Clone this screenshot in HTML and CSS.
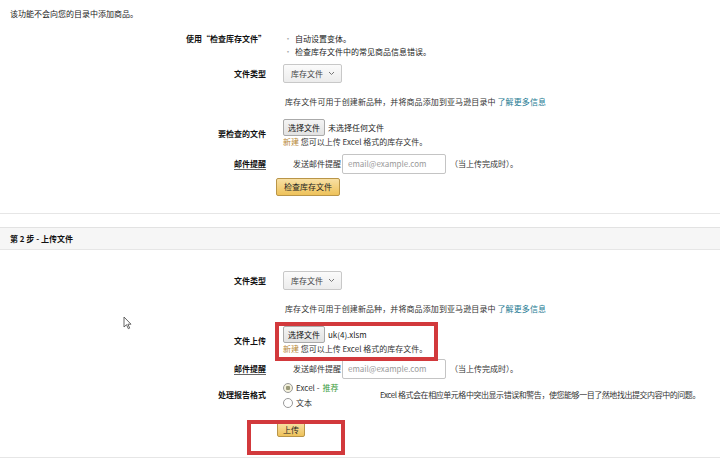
FILE: index.html
```html
<!DOCTYPE html>
<html lang="zh-CN">
<head>
  <meta charset="UTF-8">
  <title>上传库存文件</title>
  <link rel="stylesheet" href="styles.css">
</head>
<body>
  <p class="intro">该功能不会向您的目录中添加商品。</p>

  <div class="row usage">
    <div class="label">使用“检查库存文件”</div>
    <ul class="bullets">
      <li>自动设置变体。</li>
      <li>检查库存文件中的常见商品信息错误。</li>
    </ul>
  </div>

  <div class="row type">
    <div class="label">文件类型</div>
    <div><span class="select">库存文件 <svg width="7" height="5" viewBox="0 0 7 5"><path d="M1 1l2.5 2.5L6 1" fill="none" stroke="#777" stroke-width="1"/></svg></span></div>
  </div>

  <div class="row info">
    <div></div>
    <div>库存文件可用于创建新品种，并将商品添加到亚马逊目录中 <a href="#">了解更多信息</a></div>
  </div>

  <div class="row file">
    <div class="label">要检查的文件</div>
    <div>
      <div class="file-line"><span class="file-btn">选择文件</span> 未选择任何文件</div>
      <div class="hint"><span class="new">新建</span> 您可以上传 Excel 格式的库存文件。</div>
    </div>
  </div>

  <div class="row email">
    <div class="label"><span class="dotted">邮件提醒</span></div>
    <div class="email-line">发送邮件提醒<span class="input">email@example.com</span><span class="when">（当上传完成时）。</span></div>
  </div>

  <div class="action check"><span class="yellow-btn">检查库存文件</span></div>

  <div class="divider"></div>
  <div class="step">第 2 步 - 上传文件</div>

  <div class="row type type2">
    <div class="label">文件类型</div>
    <div><span class="select">库存文件 <svg width="7" height="5" viewBox="0 0 7 5"><path d="M1 1l2.5 2.5L6 1" fill="none" stroke="#777" stroke-width="1"/></svg></span></div>
  </div>

  <div class="row info">
    <div></div>
    <div>库存文件可用于创建新品种，并将商品添加到亚马逊目录中 <a href="#">了解更多信息</a></div>
  </div>

  <div class="row file">
    <div class="label">文件上传</div>
    <div>
      <div class="file-line"><span class="file-btn">选择文件</span> uk(4).xlsm</div>
      <div class="hint"><span class="new">新建</span> 您可以上传 Excel 格式的库存文件。</div>
    </div>
  </div>

  <div class="row email email2">
    <div class="label"><span class="dotted">邮件提醒</span></div>
    <div class="email-line">发送邮件提醒<span class="input">email@example.com</span><span class="when">（当上传完成时）。</span></div>
  </div>

  <div class="row format">
    <div class="label">处理报告格式</div>
    <div class="format-line">
      <div class="radios">
        <div class="radio-item"><span class="radio checked"></span>Excel - <span class="green">推荐</span></div>
        <div class="radio-item"><span class="radio"></span>文本</div>
      </div>
      <div class="format-desc">Excel 格式会在相应单元格中突出显示错误和警告，使您能够一目了然地找出提交内容中的问题。</div>
    </div>
  </div>

  <div class="action upload"><span class="yellow-btn small">上传</span></div>

  <div class="bottom-line"></div>

  <div class="mark mark-file"></div>
  <div class="mark mark-upload"></div>

  <svg class="cursor" width="9" height="14" viewBox="0 0 9 14">
    <path d="M1 1v10l2.5-2.3 1.8 4 1.4-.6-1.8-3.9H8z" fill="#fff" stroke="#555" stroke-width="0.9"/>
  </svg>
</body>
</html>
```

FILE: styles.css
```css
body {
  margin: 0;
  position: relative;
  background: #fff;
  color: #222;
  font-family: "Noto Sans CJK SC", "Noto Sans", sans-serif;
  font-size: 8px;
  line-height: 12px;
}

.intro {
  margin: 0;
  padding: 8px 10px 0;
}

.row {
  display: grid;
  grid-template-columns: 266px 1fr;
  column-gap: 17px;
  align-items: center;
}

.label {
  text-align: right;
  font-weight: bold;
  color: #111;
}

.usage {
  margin-top: 12px;
  align-items: start;
  line-height: 13px;
}

.bullets {
  margin: 0;
  padding: 0;
  list-style: none;
}

.bullets li::before {
  content: "•";
  color: #aaa;
  display: inline-block;
  width: 11px;
  padding-left: 1px;
}

.type {
  margin-top: 6px;
}

.type2 {
  margin-top: 21px;
}

.select {
  display: inline-flex;
  align-items: center;
  gap: 5px;
  height: 19px;
  box-sizing: border-box;
  padding: 0 6px 0 7px;
  border: 1px solid #c8c8c8;
  border-radius: 2px;
  background: linear-gradient(#fbfbfb, #ececec);
  color: #444;
}

.info {
  margin-top: 13px;
  color: #333;
}

.info > div:last-child {
  padding-left: 2px;
  letter-spacing: 0.1px;
}

a {
  color: #1c7a93;
  text-decoration: none;
}

.file {
  margin-top: 11px;
}

.file-line {
  display: flex;
  align-items: center;
  gap: 3px;
  height: 17px;
}

.file-btn {
  display: inline-block;
  height: 17px;
  box-sizing: border-box;
  padding: 0 4px;
  line-height: 15px;
  border: 1px solid #aaa;
  border-radius: 2px;
  background: linear-gradient(#f4f4f4, #e2e2e2);
  color: #111;
}

.hint {
  color: #333;
}

.new {
  color: #b7883a;
}

.email {
  margin-top: 6px;
}

.email2 {
  margin-top: 4px;
}

.dotted {
  border-bottom: 1px solid #666;
}

.email-line {
  display: flex;
  align-items: center;
  padding-left: 10px;
  color: #333;
}

.input {
  display: inline-block;
  width: 104px;
  height: 20px;
  box-sizing: border-box;
  margin-left: 1px;
  padding-left: 5px;
  line-height: 18px;
  border: 1px solid #c4c4c4;
  border-radius: 2px;
  color: #999;
}

.when {
  margin-left: 4px;
}

.action {
  padding-left: 276px;
}

.check {
  margin-top: 4px;
}

.yellow-btn {
  display: inline-block;
  height: 18px;
  box-sizing: border-box;
  padding: 0 7px;
  line-height: 16px;
  border: 1px solid #b99548;
  border-radius: 2px;
  background: linear-gradient(#f8e0a4, #eec25a);
  color: #222;
}

.yellow-btn.small {
  height: 15px;
  line-height: 13px;
  padding: 0 5px;
}

.divider {
  margin-top: 17px;
  border-top: 1px solid #e6e6e6;
}

.step {
  margin-top: 13px;
  height: 21px;
  line-height: 21px;
  padding-left: 10px;
  border-top: 1px solid #e2e2e2;
  border-bottom: 1px solid #e6e6e6;
  background: #f6f6f6;
  font-weight: bold;
  color: #111;
}

.format {
  margin-top: 1px;
}

.format-line {
  display: flex;
  align-items: center;
}

.radios {
  flex: none;
  width: 97px;
  line-height: 15px;
}

.radio-item {
  display: flex;
  align-items: center;
  gap: 3px;
  color: #333;
}

.radio {
  width: 10px;
  height: 10px;
  box-sizing: border-box;
  border: 1px solid #999;
  border-radius: 50%;
  background: #fff;
}

.radio.checked {
  background: radial-gradient(circle, #9a9a7a 0 2px, #f4f1dc 2.5px);
}

.green {
  color: #3a9a3a;
}

.format-desc {
  white-space: nowrap;
  letter-spacing: -0.45px;
  color: #333;
}

.upload {
  margin-top: 12px;
  padding-left: 277px;
}

.bottom-line {
  margin-top: 20px;
  border-top: 1px solid #e6e6e6;
}

.mark {
  position: absolute;
  border: 4px solid #d2393c;
  box-sizing: border-box;
}

.mark-file {
  left: 275px;
  top: 322px;
  width: 163px;
  height: 39px;
}

.mark-upload {
  left: 247px;
  top: 420px;
  width: 98px;
  height: 35px;
}

.cursor {
  position: absolute;
  left: 123px;
  top: 316px;
}
```
